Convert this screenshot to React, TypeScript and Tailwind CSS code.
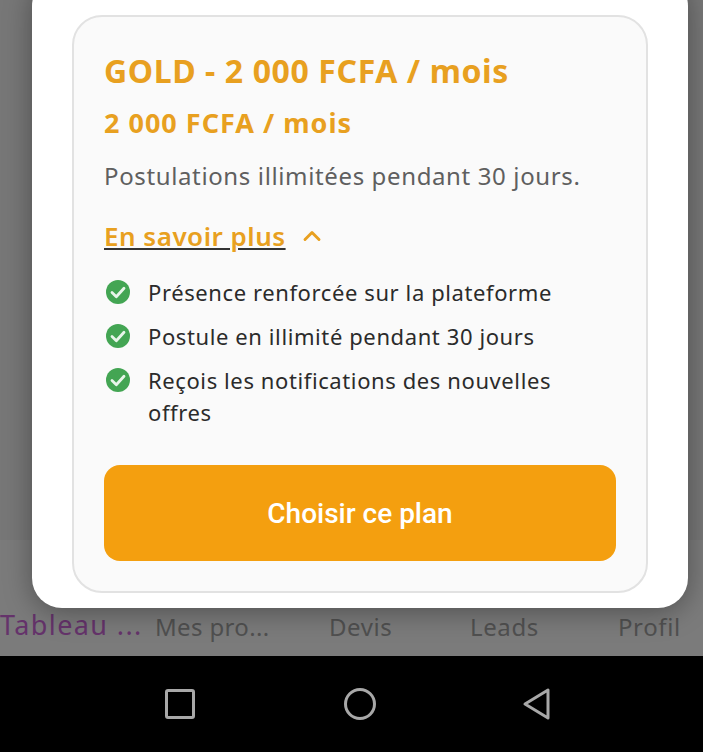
import { ChevronUp } from "lucide-react";

const features = [
  "Présence renforcée sur la plateforme",
  "Postule en illimité pendant 30 jours",
  "Reçois les notifications des nouvelles offres",
];

const tabs = [
  { label: "Tableau ...", className: "w-[155px] text-[27px] text-[#65336b] tracking-[1.4px]" },
  { label: "Mes pro...", className: "w-[138px] mt-[2px] text-[24px] text-[#505050] tracking-[0.35px]" },
  { label: "Devis", className: "w-[141px] mt-[2px] pl-[36px] text-[24px] text-[#505050] tracking-[0.6px]" },
  { label: "Leads", className: "w-[148px] mt-[2px] pl-[36px] text-[24px] text-[#505050] tracking-[0.6px]" },
  { label: "Profil", className: "mt-[2px] pl-[36px] text-[24px] text-[#505050] tracking-[0.6px]" },
];

function CheckBadge() {
  return (
    <svg className="w-[26px] h-[26px] shrink-0 mt-[3px] ml-[1px]" viewBox="0 0 26 26">
      <circle cx="13" cy="13" r="12" fill="#43a553" />
      <path d="M7 13.5l4.3 4.2 7.7-8.4" fill="none" stroke="#e8f5ea" strokeWidth="2.8" strokeLinecap="round" strokeLinejoin="round" />
    </svg>
  );
}

export default function App() {
  return (
    <div className="relative h-[752px] w-[703px] overflow-hidden flex flex-col bg-[#777777] font-['Noto_Sans',sans-serif]">
      <div className="flex-1" />

      {/* Tab bar behind the overlay */}
      <div className="h-[116px] bg-[#7b7b7b] pt-[67px] flex items-start leading-[36px]">
        {tabs.map((tab) => (
          <div key={tab.label} className={tab.className}>
            {tab.label}
          </div>
        ))}
      </div>

      {/* Android nav bar */}
      <div className="h-[96px] bg-black flex items-center justify-center pl-[14px]">
        <div className="w-[30px] h-[30px] border-[3px] border-[#a8a8a8] rounded-[3px]" />
        <div className="w-[32px] h-[32px] border-[3px] border-[#a8a8a8] rounded-full ml-[149px]" />
        <svg className="w-[30px] h-[34px] ml-[146px]" viewBox="0 0 30 34">
          <path d="M3 17L26 3v28z" fill="none" stroke="#a8a8a8" strokeWidth="3" strokeLinejoin="round" />
        </svg>
      </div>

      {/* Dialog */}
      <div className="absolute left-[32px] top-[-24px] w-[656px] h-[632px] bg-white rounded-[30px] pt-[39px] px-[40px] pb-[15px] shadow-[0_4px_28px_rgba(0,0,0,0.35)]">
        <div className="h-[578px] border-2 border-[#e2e2e2] rounded-[30px] bg-[#fafafa] px-[30px] pt-[32px]">
          <h2 className="text-[32px] leading-[44px] font-bold text-[#e8a020] tracking-[0.6px]">GOLD - 2 000 FCFA / mois</h2>
          <p className="mt-[10px] text-[27px] leading-[40px] font-bold text-[#e8a020] tracking-[1px]">2 000 FCFA / mois</p>
          <p className="mt-[15px] text-[24px] leading-[36px] text-[#5f5f5f] tracking-[0.63px]">Postulations illimitées pendant 30 jours.</p>

          <div className="mt-[24px] flex items-center gap-[12px] h-[36px]">
            <span className="text-[26px] leading-[36px] font-semibold text-[#e8a020] tracking-[0.5px] underline decoration-[#333333] underline-offset-[2px]">En savoir plus</span>
            <ChevronUp className="w-[28px] h-[28px] text-[#e8a020]" strokeWidth={2.5} />
          </div>

          <ul className="mt-[22px] flex flex-col gap-[12px]">
            {features.map((item) => (
              <li key={item} className="flex items-start gap-[17px]">
                <CheckBadge />
                <span className="text-[22px] leading-[32px] text-[#2b2b2b] tracking-[0.6px]">{item}</span>
              </li>
            ))}
          </ul>

          <button className="mt-[37px] pt-[2px] w-full h-[96px] bg-[#f49f0f] rounded-[16px] text-white text-[28px] font-medium font-['Roboto',sans-serif]">
            Choisir ce plan
          </button>
        </div>
      </div>
    </div>
  );
}
